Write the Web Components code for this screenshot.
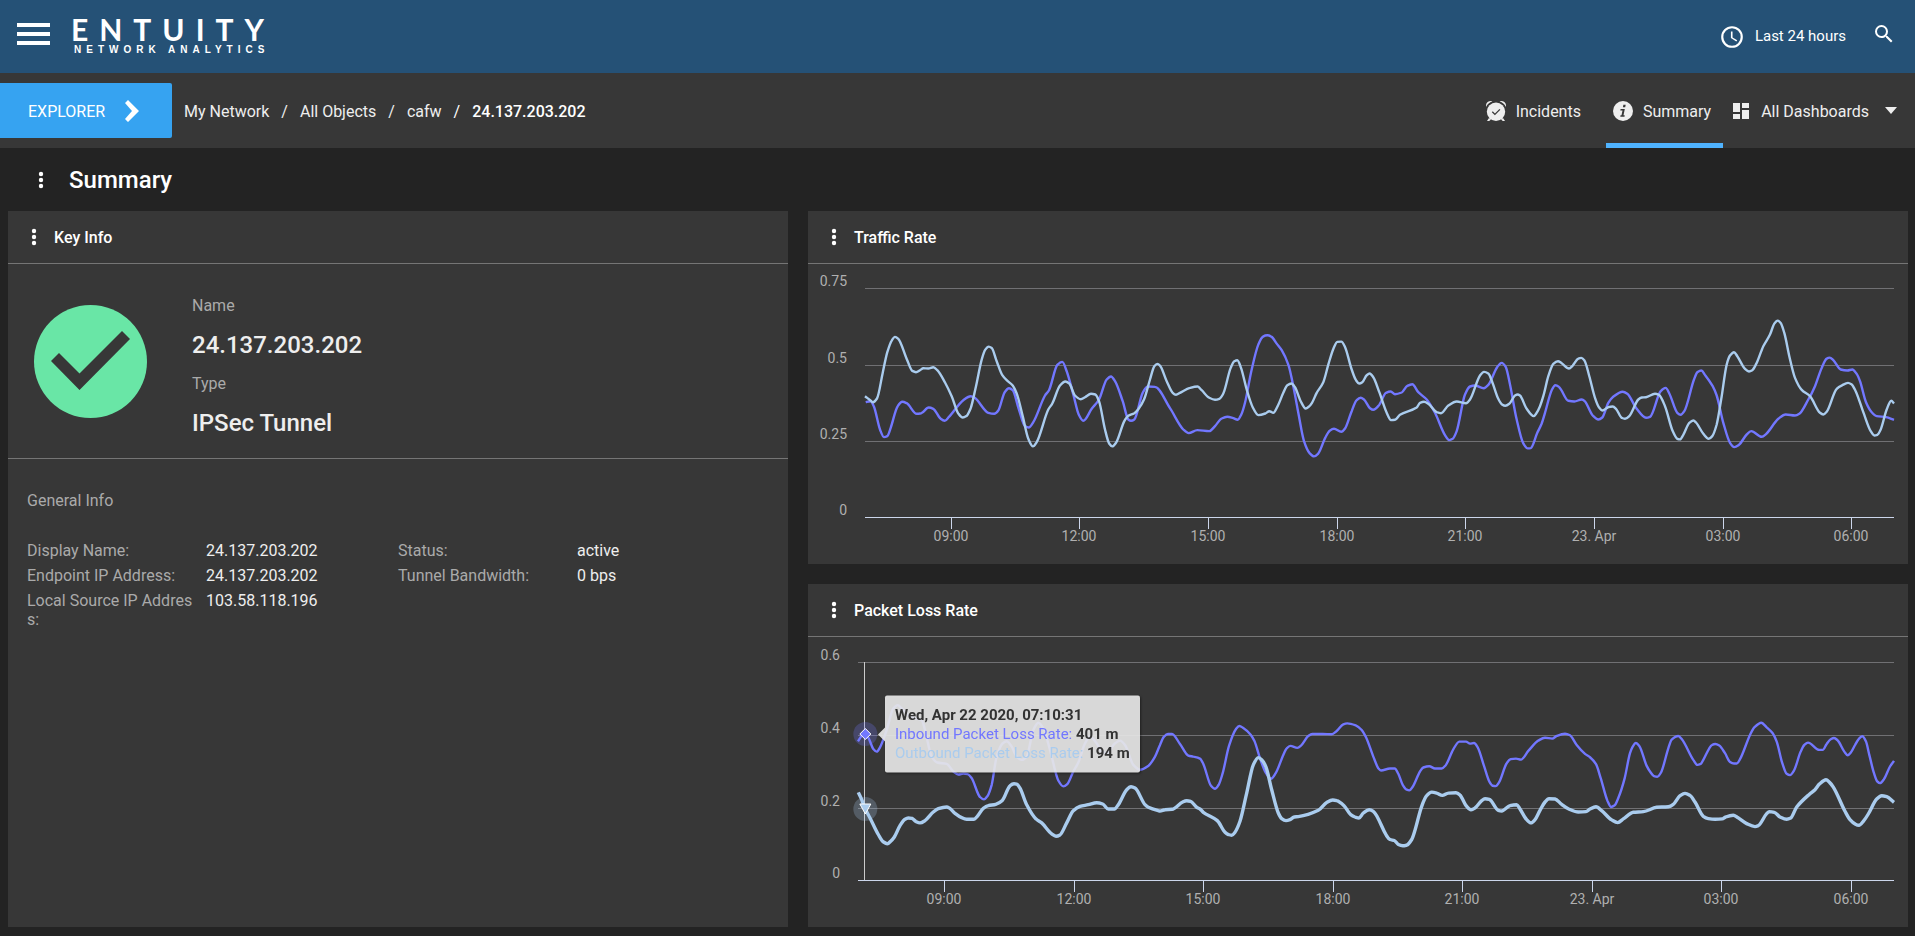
<!DOCTYPE html>
<html lang="en">
<head>
<meta charset="utf-8">
<title>Entuity Network Analytics - Summary</title>
<style>
  html, body { margin: 0; background: #232323; }
  body { font: 16px/19px Roboto, sans-serif; color: #eee; }
</style>
</head>
<body>
<network-app></network-app>

<template id="app-tpl">
  <style>
    :host { display: flex; flex-direction: column; min-height: 100vh; }
    main { flex: 1; display: flex; flex-direction: column; }
    .title { display: flex; align-items: center; gap: 19px; height: 63px; padding-left: 32px; box-sizing: border-box; }
    h1 { margin: 0; font-size: 24px; line-height: 28px; font-weight: 500; color: #fff; }
    .grid { flex: 1; display: grid; grid-template-columns: 39fr 55fr; gap: 20px; padding: 0 7px 9px 8px; }
    .charts { display: grid; grid-template-rows: 353fr 343fr; gap: 20px; min-width: 0; }
    .in { color: #7277ff; }
    .out { color: #aaccee; }
  </style>
  <app-header></app-header>
  <nav-bar></nav-bar>
  <main>
    <div class="title"><kebab-button label="Dashboard menu"></kebab-button><h1>Summary</h1></div>
    <div class="grid">
      <dash-panel heading="Key Info"><key-info></key-info></dash-panel>
      <div class="charts">
        <dash-panel heading="Traffic Rate"><line-chart source="traffic"></line-chart></dash-panel>
        <dash-panel heading="Packet Loss Rate">
          <line-chart source="loss">
            <chart-tooltip when="Wed, Apr 22 2020, 07:10:31">
              <span slot="rows"><span class="in">Inbound Packet Loss Rate: </span><b>401 m</b></span>
              <span slot="rows"><span class="out">Outbound Packet Loss Rate: </span><b>194 m</b></span>
            </chart-tooltip>
          </line-chart>
        </dash-panel>
      </div>
    </div>
  </main>
</template>

<template id="header-tpl">
  <style>
    :host { display: block; background: #255176; color: #fff; }
    header { display: flex; align-items: center; height: 73px; padding: 0 19px 0 17px; box-sizing: border-box; }
    button { all: unset; cursor: pointer; display: flex; align-items: center; }
    svg { display: block; fill: currentColor; }
    .menu { margin-bottom: 6px; }
    .logo { display: flex; flex-direction: column; margin: 0 0 4px 21px; color: #fff; text-decoration: none; font-weight: 700; text-transform: uppercase; white-space: nowrap; }
    .name { font-family: Lato, sans-serif; font-size: 30px; line-height: 30px; letter-spacing: 11px; }
    .sub { font-family: "Liberation Sans", sans-serif; font-size: 10px; line-height: 10px; letter-spacing: 5px; padding: 1px 0 0 3px; }
    .range { margin-left: auto; gap: 10px; font-size: 15px; line-height: 19px; }
    .search { margin: 0 0 5px 26px; }
  </style>
  <header>
    <button class="menu" aria-label="Main menu"><svg width="33" height="22"><path d="M0 0h33v4H0zM0 9h33v4H0zM0 18h33v4H0z"/></svg></button>
    <a class="logo" href="#"><span class="name">Entuity</span><span class="sub">Network Analytics</span></a>
    <button class="range"><svg width="26" height="26" viewBox="0 0 24 24"><path d="M12 2a10 10 0 1 0 0 20 10 10 0 0 0 0-20zm0 18a8 8 0 1 1 0-16 8 8 0 0 1 0 16zm.5-13H11v6l5 3.200.8-1.300-4.300-2.500z"/></svg><span>Last 24 hours</span></button>
    <button class="search" aria-label="Search"><svg width="24" height="24" viewBox="0 0 24 24"><path d="M15.500 14h-.79l-.28-.27A6.470 6.470 0 0 0 16 9.500 6.500 6.500 0 1 0 9.500 16c1.610 0 3.090-.59 4.230-1.570l.27.28v.79l5 4.990L20.490 19l-4.990-5zm-6 0a4.500 4.500 0 1 1 0-9 4.500 4.500 0 0 1 0 9z"/></svg></button>
  </header>
</template>

<template id="nav-tpl">
  <style>
    :host { display: block; background: #373737; }
    nav { display: flex; align-items: center; height: 75px; padding-right: 18px; box-sizing: border-box; }
    button { all: unset; cursor: pointer; display: flex; align-items: center; }
    a { color: inherit; text-decoration: none; }
    svg { display: block; fill: #eee; }
    span, ol { padding-top: 1px; }
    .explorer { height: 55px; width: 172px; box-sizing: border-box; padding-left: 28px; gap: 20px; background: #36a3f1; color: #fff; border-radius: 0 2px 2px 0; }
    ol { display: flex; list-style: none; margin: 0; padding-left: 12px; }
    li + li::before { content: "/"; margin: 0 12px; font-weight: 400; }
    li:last-child { font-weight: 500; color: #fff; }
    .tabs { display: flex; align-items: center; align-self: stretch; margin-left: auto; }
    .tab { display: flex; align-items: center; gap: 10px; height: 75px; box-sizing: border-box; padding: 0 12px 0 7px; }
    .tab + .tab { margin-left: 13px; }
    .tab.on { border: solid #4fb3ff; border-width: 0 0 5px; padding-top: 5px; }
    .all { gap: 12px; margin-left: 10px; }
    .caret { margin-left: 4px; }
  </style>
  <nav>
    <button class="explorer"><span>EXPLORER</span><svg width="14" height="22" viewBox="0 0 14 22"><path d="M3 0 14 11 3 22 0 19l7-8-7-8z" fill="#fff"/></svg></button>
    <ol>
      <li><a href="#">My Network</a></li><li><a href="#">All Objects</a></li><li><a href="#">cafw</a></li><li><a href="#" aria-current="page">24.137.203.202</a></li>
    </ol>
    <div class="tabs">
      <a class="tab" href="#"><svg width="20" height="20" viewBox="0 0 20 20"><circle cx="10" cy="10.800" r="9.200"/><path d="M0 6C-.6 2 2.500-.6 6.400.3 3.600 1.400 1.300 3.200 0 6zM20 6C20.600 2 17.500-.6 13.600.3c2.800 1.100 5.100 2.900 6.400 5.700zM3 17 1 20h2.200l1.800-1.500zM17 17l2 3h-2.200L15 18.500z"/><path d="m6.300 10.800 2.600 2.600 5-5" fill="none" stroke="#373737" stroke-width="1.300"/></svg><span>Incidents</span></a>
      <a class="tab on" href="#" aria-current="page"><svg width="20" height="20" viewBox="0 0 20 20"><circle cx="10" cy="10" r="10"/><path d="M10.400 3.800h2.300l-.5 2.400H9.900zM7.600 8h4.200l-1.300 6.300h1.200l-.2 1.500H7.300l.2-1.500h1L9.500 9.400H7.300z" fill="#373737"/></svg><span>Summary</span></a>
      <button class="all" aria-haspopup="menu"><svg width="16" height="16"><path d="M0 0h7v9H0zM9 0h7v5H9zM0 11h7v5H0zM9 7h7v9H9z"/></svg><span>All Dashboards</span><svg class="caret" width="12" height="7"><path d="M0 0h12L6 7z"/></svg></button>
    </div>
  </nav>
</template>

<template id="kebab-tpl">
  <style>
    :host { display: block; }
    button { all: unset; cursor: pointer; display: block; }
    svg { display: block; fill: #fff; }
  </style>
  <button><svg width="18" height="18"><circle cx="9" cy="3" r="2.200"/><circle cx="9" cy="9" r="2.200"/><circle cx="9" cy="15" r="2.200"/></svg></button>
</template>

<template id="panel-tpl">
  <style>
    :host { display: flex; flex-direction: column; background: #373737; min-width: 0; }
    header { display: flex; align-items: center; gap: 11px; height: 53px; padding-left: 17px; box-sizing: border-box; border-bottom: 1px solid #757575; }
    h2 { margin: 0; font-size: 16px; line-height: 19px; font-weight: 500; color: #fff; }
    .body { flex: 1; display: flex; flex-direction: column; min-width: 0; }
    ::slotted(*) { flex: 1; }
  </style>
  <header><kebab-button label="Panel menu"></kebab-button><h2></h2></header>
  <div class="body"><slot></slot></div>
</template>

<template id="key-tpl">
  <style>
    :host { display: block; }
    .top { display: flex; align-items: center; gap: 45px; padding-left: 26px; border-bottom: 1px solid #757575; }
    dl, dd, h3 { margin: 0; font-weight: 400; font-size: 16px; }
    dt, h3 { color: #aaa; }
    .id { padding: 30px 0 8px; }
    .id dt { line-height: 24px; }
    .id dd { font-size: 24px; line-height: 54px; font-weight: 500; }
    .info { padding: 32px 19px; }
    .cols { display: grid; grid-template-columns: 1fr 1fr; align-items: start; margin-top: 28px; }
    .cols div { display: grid; grid-template-columns: 169px 1fr; column-gap: 10px; padding: 3px 0; }
    .cols dt { word-break: break-all; }
  </style>
  <div class="top">
    <svg width="113" height="113" viewBox="0 0 113 113" role="img" aria-label="OK"><circle cx="56.500" cy="56.500" r="56.500" fill="#69e6a6"/><path d="m17 56 8-8 20.500 20.500L88 26l8 8-50.500 51z" fill="#373737"/></svg>
    <dl class="id"><dt>Name</dt><dd>24.137.203.202</dd><dt>Type</dt><dd>IPSec Tunnel</dd></dl>
  </div>
  <div class="info">
    <h3>General Info</h3>
    <div class="cols">
      <dl>
        <div><dt>Display Name:</dt><dd>24.137.203.202</dd></div>
        <div><dt>Endpoint IP Address:</dt><dd>24.137.203.202</dd></div>
        <div><dt>Local Source IP Address:</dt><dd>103.58.118.196</dd></div>
      </dl>
      <dl>
        <div><dt>Status:</dt><dd>active</dd></div>
        <div><dt>Tunnel Bandwidth:</dt><dd>0 bps</dd></div>
      </dl>
    </div>
  </div>
</template>

<template id="chart-tpl">
  <style>
    :host { display: block; position: relative; min-height: 280px; }
    svg { position: absolute; inset: 0; width: 100%; height: 100%; }
    text { font: 14px Roboto, sans-serif; fill: #b0b0b0; }
    ::slotted(*) { position: absolute; transform: translateY(-50%); }
  </style>
  <svg role="img"></svg>
  <slot></slot>
</template>

<template id="tooltip-tpl">
  <style>
    :host { display: block; filter: drop-shadow(1px 1px 1px rgba(0,0,0,.5)); pointer-events: none; }
    .box { display: flex; flex-direction: column; padding: 10px; background: rgba(247,247,247,.86); border-radius: 2px; color: #333; font-size: 15px; line-height: 19px; white-space: nowrap; }
    .tip { position: absolute; right: 100%; top: 50%; margin-top: -7px; border: 7px solid transparent; border-left-width: 0; border-right-color: rgba(247,247,247,.86); }
  </style>
  <div class="tip"></div>
  <div class="box"><b class="when"></b><slot name="rows"></slot></div>
</template>

<script>
const mount = (host, id) => {
  const root = host.attachShadow({ mode: 'open' });
  root.append(document.getElementById(id).content.cloneNode(true));
  return root;
};
const simple = (name, id) => customElements.define(name, class extends HTMLElement {
  constructor() { super(); mount(this, id); }
});

/* Each series is a list of batches: [x origin, y origin, x, y, x, y, ...].
   x runs 0..width over the 24 hours, y runs downwards 0..height over the scale. */
const SOURCES = {
  traffic: {
    width: 3087, height: 688, left: 57, top: 24,
    scale: ['0.75', '0.5', '0.25', '0'],
    series: [
      { color: '#7277ff', size: 2.4, data: [
        [-195,-265, 197,608,212,605,222,622,240,690,252,713,262,710,272,685,293,620,307,607,320,611,350,643,364,641,386,624,400,628,422,658,434,664,447,652,490,602,512,590,524,595,565,640,583,643,595,633,614,578,627,566,638,572,656,628,675,680,686,684,700,668,735,588,747,572,772,496,787,487,800,515,820,585,836,645,850,664,875,628,897,600,920,540,933,531,945,545,968,605,985,660,993,664,1003,660,1028,580,1043,561,1065,562,1110,626,1150,690],
        [945,-55, 26,491,52,482,88,485,105,470,125,447,142,442,160,446,173,451,184,435,195,400,215,300,235,225,249,201,262,197,274,201,290,222,305,242,325,285,340,350,355,430,372,515,388,550,402,561,414,553,437,502,450,483,462,478,484,487,495,477,515,425,530,392,542,385,552,390,570,416,580,421,597,407,618,370,632,366,645,374,665,369,682,349,697,344,715,368,740,390,765,430,795,497,808,512,818,508,830,485,855,375,870,351,885,348,911,356,925,346,952,292,965,280,977,292,990,345,1010,450,1030,522,1043,537,1052,536,1072,490],
        [2025,-55, 5,462,15,430,36,360,46,347,57,352,85,394,103,396,125,390,134,395,158,438,175,450,187,444,205,400,218,383,248,367,262,373,290,418,318,445,330,442,362,365,377,355,388,372,412,430,422,436,433,425,462,330,473,307,484,303,495,316,518,350,530,378,550,460,570,520,583,533,597,526,620,495,634,485,665,502,678,494,715,448,737,435,765,438,778,433,805,390,825,350,845,295,860,267,869,264,880,272,902,300,922,303,937,300,950,313,960,335,978,398,995,428,1010,440,1038,443,1062,451]] },
      { color: '#aaccee', size: 2.4, data: [
        [-195,-265, 195,590,208,600,219,608,231,597,248,520,262,458,275,423,285,412,295,418,320,478,337,514,348,518,360,512,370,506,385,507,400,503,412,512,435,549,455,590,475,642,488,654,499,650,512,626,528,560,545,480,556,450,566,441,575,445,590,485,607,527,620,542,638,558,650,582,668,650,685,718,699,741,710,728,745,630,757,612,780,558,796,546,808,552,825,588,842,599,855,593,873,583,886,585,897,605,915,690,928,733,937,741,948,730,973,665,985,649,1003,641,1015,629,1032,600,1050,540,1063,500,1072,493,1080,498,1100,545,1118,580,1128,586,1140,580],
        [945,-55, 30,355,53,351,65,362,88,385,105,391,118,388,130,372,152,295,163,275,172,272,183,295,200,360,218,413,235,437,256,432,268,425,280,430,292,412,310,370,322,347,334,342,345,353,362,395,377,417,386,412,396,400,410,370,430,338,445,285,460,238,472,217,484,216,495,232,515,300,528,332,538,342,547,338,560,317,569,312,580,323,598,368,620,430,633,452,645,451,660,436,710,414,720,400,732,397,745,403,770,428,783,431,805,408,830,396,858,401,870,390,900,318,912,307,925,312,937,338,955,388,966,405,976,409,988,403,1005,378,1013,375,1020,378,1040,418,1061,440,1070,430],
        [2025,-55, 0,410,10,380,25,320,40,283,54,275,65,281,87,297,98,288,115,267,124,265,133,272,148,320,165,385,178,415,187,423,205,413,218,411,228,418,245,445,255,448,268,440,295,390,305,384,318,383,345,373,357,376,375,410,398,485,412,508,420,510,430,496,448,460,460,453,468,459,490,493,506,508,517,500,530,465,545,380,560,285,570,258,582,248,592,260,615,298,627,306,637,302,650,280,670,230,690,195,703,162,713,153,722,160,733,190,748,260,765,325,785,361,810,380,840,430,850,435,860,427,890,358,907,347,924,340,935,345,947,365,970,428,992,485,1003,498,1012,496,1022,480,1040,420,1054,394,1062,402]] }
    ]
  },
  loss: {
    width: 3108, height: 657, left: 50, top: 25, cursor: 22,
    scale: ['0.6', '0.4', '0.2', '0'],
    marks: [{ y: 217, shape: 'M0-5.500 5.500 0 0 5.500-5.500 0z', color: '#7277ff' }, { y: 443, shape: 'M-5.500-5H5.500L0 5z', color: '#aaccee' }],
    series: [
      { color: '#7277ff', size: 2.4, data: [
        [-174,-275, 174,514,185,498,196,492,206,505,220,537,230,545,240,532,260,480,280,415,293,405,305,415,330,440,365,450,375,480,395,560,412,578,440,582,460,605,475,614,490,611,503,613,515,625,540,682,552,689,563,678,575,645,590,560,608,520,620,514,635,530,650,560,665,570,680,560,700,480,715,458,730,475,750,540,775,632,790,650,802,643,820,605,835,578,855,520,870,500,890,520,905,545,920,550,945,520,960,512,975,525,1000,585,1020,600,1045,588,1065,560],
        [906,-65, 0,315,12,290,24,282,36,282,60,312,85,347,100,350,120,356,130,372,153,438,165,447,176,435,188,400,207,318,228,267,238,258,250,264,272,284,284,305,300,355,318,400,333,417,347,400,370,345,380,325,391,318,412,324,422,318,445,288,457,282,488,282,515,283,530,273,550,253,562,250,587,256,605,270,618,292,640,350,655,385,663,392,690,386,704,386,715,402,728,435,740,450,748,452,758,441,780,395,790,383,808,379,825,386,845,386,857,376,880,328,898,305,918,305,930,311,942,309,953,322,972,378,988,425,998,438,1007,439,1017,428,1040,370,1052,358,1068,356,1083,359,1105,333,1135,302],
        [2016,-65, 45,293,67,296,80,288,105,281,120,286,140,315,165,342,180,352,198,373,212,415,232,482,243,502,254,497,265,475,284,415,300,340,308,320,317,309,328,318,350,378,362,398,372,409,382,411,393,398,415,325,425,299,445,288,455,297,490,360,502,375,512,372,520,360,538,325,546,315,556,312,568,317,585,340,600,366,612,371,620,371,630,358,660,285,673,262,694,248,710,262,728,280,740,305,757,370,770,402,780,406,792,392,812,335,823,315,834,308,868,330,878,330,890,312,902,298,912,294,922,300,943,335,953,346,963,337,975,315,988,295,997,289,1008,305,1018,345,1032,400,1042,425,1050,430,1062,418,1080,380,1092,363]] },
      { color: '#aaccee', size: 3.4, data: [
        [-174,-275, 175,668,185,690,196,718,210,745,235,795,250,817,262,823,272,815,282,804,300,768,315,749,325,745,335,746,348,756,360,760,375,753,400,727,415,717,440,712,448,715,465,731,485,744,500,749,522,749,532,740,550,716,565,708,587,704,607,692,630,648,642,642,650,643,660,655,680,705,708,748,725,760,755,793,768,800,780,796,800,760,820,723,840,710,865,705,890,699,908,703,925,718,943,718,955,705,980,660,993,651,1005,655,1035,705,1045,713,1075,723],
        [906,-65, 0,514,15,510,36,509,68,487,80,483,92,485,110,503,120,508,130,518,172,543,195,578,205,585,215,587,225,578,240,545,260,460,280,375,295,353,307,362,318,382,335,450,355,520,365,537,378,543,390,540,403,532,415,531,475,512,500,488,518,481,530,483,552,498,572,525,585,532,597,535,610,520,628,510,640,515,690,600,703,603,715,615,728,619,740,617,755,600,765,572,785,500,800,468,815,457,830,460,847,467,865,460,888,459,900,466,920,500,933,510,945,505,965,483,975,477,988,479,1015,512,1025,514,1050,498,1070,495,1080,508,1100,540,1113,550,1125,540],
        [2016,-65, 30,512,45,487,57,477,75,478,95,494,115,507,145,517,168,516,180,508,198,501,215,513,245,541,263,549,280,538,310,518,340,516,380,503,415,501,430,494,450,468,465,461,480,467,495,487,520,530,535,537,555,539,577,538,587,532,610,527,622,533,650,552,675,561,685,558,710,522,718,516,733,518,750,532,770,539,782,535,800,502,840,462,855,450,868,433,888,420,898,427,910,442,945,515,960,540,975,553,987,557,1000,545,1015,523,1040,478,1055,468,1070,471,1092,488]] }
    ]
  }
};
const HOURS = ['09:00', '12:00', '15:00', '18:00', '21:00', '23. Apr', '03:00', '06:00'];

/* Smooth path through the points whose tangents are flat at each local extreme. */
function spline(p) {
  const n = p.length, m = [];
  const slope = i => (p[i + 1][1] - p[i][1]) / (p[i + 1][0] - p[i][0]);
  for (let i = 0; i < n; i++) {
    if (i === 0) m.push(slope(0));
    else if (i === n - 1) m.push(slope(n - 2));
    else {
      const a = slope(i - 1), b = slope(i);
      m.push(a * b <= 0 ? 0 : 2 * a * b / (a + b));
    }
  }
  let d = 'M' + p[0].map(v => v.toFixed(1));
  for (let i = 1; i < n; i++) {
    const h = (p[i][0] - p[i - 1][0]) / 3;
    d += 'C' + [p[i - 1][0] + h, p[i - 1][1] + m[i - 1] * h, p[i][0] - h, p[i][1] - m[i] * h, ...p[i]].map(v => v.toFixed(1));
  }
  return d;
}

simple('app-header', 'header-tpl');
simple('nav-bar', 'nav-tpl');
simple('key-info', 'key-tpl');

customElements.define('kebab-button', class extends HTMLElement {
  constructor() { super(); mount(this, 'kebab-tpl'); }
  connectedCallback() { this.shadowRoot.querySelector('button').setAttribute('aria-label', this.getAttribute('label')); }
});

customElements.define('dash-panel', class extends HTMLElement {
  constructor() { super(); mount(this, 'panel-tpl'); }
  connectedCallback() { this.shadowRoot.querySelector('h2').textContent = this.getAttribute('heading'); }
});

customElements.define('chart-tooltip', class extends HTMLElement {
  constructor() { super(); mount(this, 'tooltip-tpl'); }
  connectedCallback() { this.shadowRoot.querySelector('.when').textContent = this.getAttribute('when'); }
});

customElements.define('line-chart', class extends HTMLElement {
  constructor() { super(); mount(this, 'chart-tpl'); }
  connectedCallback() {
    this.observer = new ResizeObserver(() => this.draw());
    this.observer.observe(this);
    this.draw();
  }
  disconnectedCallback() { this.observer.disconnect(); }
  draw() {
    const src = SOURCES[this.getAttribute('source')];
    const { left, top } = src, w = this.clientWidth - left - 14, h = this.clientHeight - top - 47;
    if (w <= 0 || h <= 0) return;
    const X = v => left + v / src.width * w, Y = v => top + v / src.height * h;
    let out = '';
    src.scale.forEach((label, i) => {
      const y = Math.ceil(top + h * i / 3), base = i === 3;
      out += `<path d="M${left} ${y + .5}h${w}" stroke="${base ? '#ccd6eb' : '#707073'}"/>`;
      out += `<text x="${left - 18}" y="${y - 2}" text-anchor="end">${label}</text>`;
    });
    HOURS.forEach((label, i) => {
      const x = Math.round(left + w * (2 + 3 * i) / 24);
      out += `<path d="M${x + .5} ${top + h}v12" stroke="#ccd6eb"/>`;
      out += `<text x="${x}" y="${top + h + 24}" text-anchor="middle">${label}</text>`;
    });
    if (src.cursor) out += `<path d="M${Math.round(X(src.cursor)) - .5} ${top}v${h}" stroke="#ccc"/>`;
    for (const s of src.series) {
      const pts = [];
      for (const [ox, oy, ...v] of s.data)
        for (let i = 0; i < v.length; i += 2) pts.push([X(v[i] + ox), Y(v[i + 1] + oy)]);
      out += `<path d="${spline(pts)}" fill="none" stroke="${s.color}" stroke-width="${s.size}" stroke-linejoin="round"/>`;
    }
    for (const k of src.marks || []) {
      out += `<g transform="translate(${X(src.cursor)} ${Y(k.y)})"><circle r="12" fill="${k.color}" opacity=".25"/><path d="${k.shape}" fill="${k.color}" stroke="#fff"/></g>`;
    }
    this.shadowRoot.querySelector('svg').innerHTML = out;
    const tip = this.querySelector('chart-tooltip');
    if (tip) {
      tip.style.left = Math.round(X(src.cursor)) + 20 + 'px';
      tip.style.top = Math.round(Y(src.marks[0].y)) + 'px';
    }
  }
});

simple('network-app', 'app-tpl');
</script>
</body>
</html>
